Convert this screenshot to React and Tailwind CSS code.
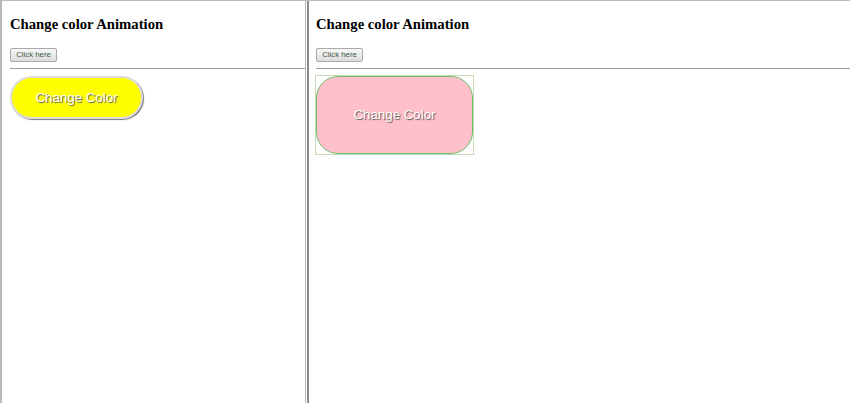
import React from 'react';

function Pane({ children, className }) {
    return (
        <div className={`flex flex-col h-full ${className}`}>
            <h3 className="mt-[14px] text-[14.7px] leading-[18px] font-bold text-black [font-family:'Liberation_Serif',serif]">
                Change color Animation
            </h3>
            <div className="mt-[15px] flex">
                <button className="h-[14px] w-[47px] border border-[#a9a9a9] rounded-[2px] bg-gradient-to-b from-[#f8f8f8] to-[#dcdcdc] text-[7.8px] leading-[12px] text-[#3d5b3d] [font-family:'Liberation_Sans',sans-serif]">
                    Click here
                </button>
            </div>
            <hr className="mt-[6px] border-t border-[#a0a0a0]" />
            {children}
        </div>
    );
}

export default function App() {
    const label = "text-white text-[13.3px] [font-family:'Liberation_Sans',sans-serif] [text-shadow:1px_1px_1px_#555]";

    return (
        <div className="w-[850px] h-[403px] flex bg-white border-t border-[#bbbbbb] overflow-hidden">
            <Pane className="w-[306px] pl-2 border-l-2 border-r border-[#b8b8b8]">
                <div className="mt-[7px] w-[133px] h-[43px] rounded-full bg-[#ffff00] border-2 border-[#dcdcdc] shadow-[1px_1px_1px_#777] flex items-center justify-center">
                    <span className={label}>Change Color</span>
                </div>
            </Pane>
            <Pane className="flex-1 ml-px pl-[7px] border-l-2 border-[#8a8a8a]">
                <div className="mt-[6px] -ml-px w-[159px] h-[80px] border border-[#c4dbb6]">
                    <div className="w-full h-full rounded-[22px] bg-[#ffc0cb] border-[1.5px] border-[#6fbf6a] flex items-center justify-center">
                        <span className={label}>Change Color</span>
                    </div>
                </div>
            </Pane>
        </div>
    );
}
